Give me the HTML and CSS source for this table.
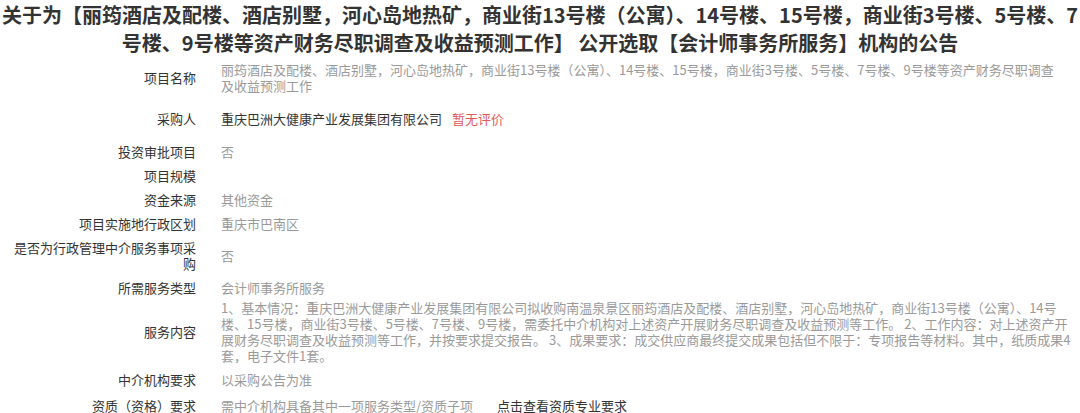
FILE: index.html
```html
<!DOCTYPE html>
<html lang="zh-CN">
<head>
<meta charset="utf-8">
<title>公告</title>
<link rel="stylesheet" href="styles.css">
</head>
<body>
<div class="page">
  <h1 class="title">关于为【丽筠酒店及配楼、酒店别墅，河心岛地热矿，商业街13号楼（公寓）、14号楼、15号楼，商业街3号楼、5号楼、7号楼、9号楼等资产财务尽职调查及收益预测工作】 公开选取【会计师事务所服务】机构的公告</h1>
  <div class="info">
    <div class="row row-name">
      <div class="label">项目名称</div>
      <div class="value value-name">丽筠酒店及配楼、酒店别墅，河心岛地热矿，商业街13号楼（公寓）、14号楼、15号楼，商业街3号楼、5号楼、7号楼、9号楼等资产财务尽职调查及收益预测工作</div>
    </div>
    <div class="row row-buyer">
      <div class="label">采购人</div>
      <div class="value"><span class="dark">重庆巴洲大健康产业发展集团有限公司</span><span class="red">暂无评价</span></div>
    </div>
    <div class="row">
      <div class="label">投资审批项目</div>
      <div class="value">否</div>
    </div>
    <div class="row">
      <div class="label">项目规模</div>
      <div class="value"></div>
    </div>
    <div class="row">
      <div class="label">资金来源</div>
      <div class="value">其他资金</div>
    </div>
    <div class="row">
      <div class="label">项目实施地行政区划</div>
      <div class="value">重庆市巴南区</div>
    </div>
    <div class="row">
      <div class="label">是否为行政管理中介服务事项采购</div>
      <div class="value">否</div>
    </div>
    <div class="row">
      <div class="label">所需服务类型</div>
      <div class="value">会计师事务所服务</div>
    </div>
    <div class="row row-content">
      <div class="label">服务内容</div>
      <div class="value">1、基本情况：重庆巴洲大健康产业发展集团有限公司拟收购南温泉景区丽筠酒店及配楼、酒店别墅，河心岛地热矿，商业街13号楼（公寓）、14号楼、15号楼，商业街3号楼、5号楼、7号楼、9号楼，需委托中介机构对上述资产开展财务尽职调查及收益预测等工作。 2、工作内容：对上述资产开展财务尽职调查及收益预测等工作，并按要求提交报告。 3、成果要求：成交供应商最终提交成果包括但不限于：专项报告等材料。其中，纸质成果4套，电子文件1套。</div>
    </div>
    <div class="row row-agency">
      <div class="label">中介机构要求</div>
      <div class="value">以采购公告为准</div>
    </div>
    <div class="row">
      <div class="label">资质（资格）要求</div>
      <div class="value"><span>需中介机构具备其中一项服务类型/资质子项</span><span class="link">点击查看资质专业要求</span></div>
    </div>
  </div>
</div>
</body>
</html>
```

FILE: styles.css
```css
html, body {
  margin: 0;
  padding: 0;
  background: #ffffff;
}

body {
  font-family: "Microsoft YaHei", "Noto Sans CJK SC", "Noto Sans", sans-serif;
  width: 1080px;
  height: 413px;
  overflow: hidden;
}

.page {
  display: flex;
  flex-direction: column;
}

.title {
  margin: 0;
  padding: 1px 0 1px;
  font-size: 20px;
  line-height: 28px;
  font-weight: 700;
  color: #333333;
  text-align: center;
}

.info {
  display: flex;
  flex-direction: column;
  font-size: 13px;
  line-height: 16px;
}

.row {
  display: flex;
  align-items: center;
  gap: 25px;
  padding: 4px 0;
}

.label {
  flex: 0 0 183px;
  margin-left: 13px;
  text-align: right;
  color: #333333;
}

.value {
  flex: 0 0 850px;
  color: #9a9a9a;
}

.value-name {
  flex-basis: 842px;
}

.row-buyer {
  padding: 13px 0 13px;
}

.row-content {
  padding: 0 0 4px;
}

.row-agency {
  padding: 4px 0 6px;
}

.dark {
  color: #333333;
}

.red {
  color: #e05a5a;
  margin-left: 10px;
}

.link {
  color: #333333;
  margin-left: 24px;
}
```
